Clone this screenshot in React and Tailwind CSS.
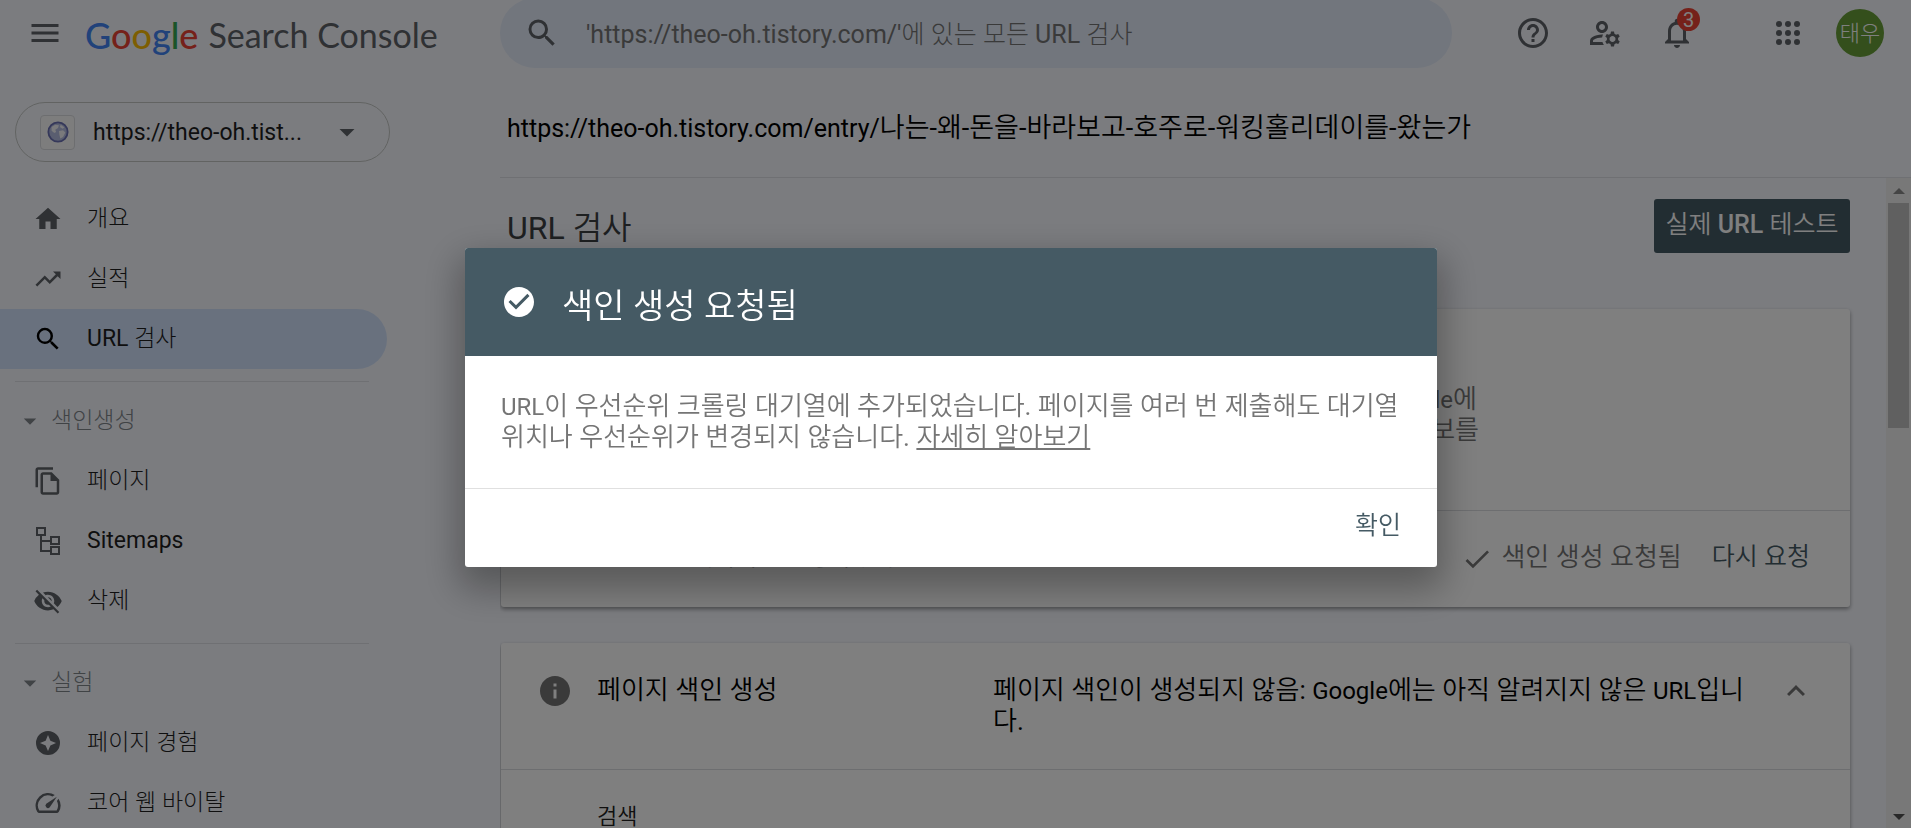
import React, { useState } from 'react';
import {
  MdMenu,
  MdSearch,
  MdHelpOutline,
  MdOutlineManageAccounts,
  MdNotificationsNone,
  MdHome,
  MdTrendingUp,
  MdOutlineFileCopy,
  MdVisibilityOff,
  MdCheck,
  MdCheckCircle,
  MdInfo,
  MdExpandLess,
  MdArrowDropDown,
} from 'react-icons/md';

const SitemapIcon = ({ className }) => (
  <svg viewBox="0 0 30 30" className={className} fill="none" stroke="currentColor" strokeWidth="2">
    <rect x="4" y="2" width="8" height="7" />
    <path d="M8 9v16h9M8 15h9" />
    <rect x="18" y="11" width="8" height="7" />
    <rect x="18" y="21" width="8" height="7" />
  </svg>
);

const ExperienceIcon = ({ className }) => (
  <svg viewBox="0 0 24 24" className={className} fill="currentColor">
    <path
      fillRule="evenodd"
      d="M12 2.400a9.600 9.600 0 1 0 0 19.200a9.600 9.600 0 0 0 0-19.200zM12 5.600l1.900 4.500l4.500 1.900l-4.500 1.900l-1.900 4.500l-1.900-4.500l-4.500-1.900l4.500-1.900z"
    />
  </svg>
);

const SpeedIcon = ({ className }) => (
  <svg viewBox="0 0 24 24" className={className} fill="currentColor">
    <path d="M20.380 8.570l-1.230 1.850a8 8 0 0 1-.22 7.580H5.070A8 8 0 0 1 15.580 6.850l1.850-1.230A10 10 0 0 0 3.350 19a2 2 0 0 0 1.720 1h13.850a2 2 0 0 0 1.740-1 10 10 0 0 0-.27-10.440z" />
    <path d="M10.590 15.410a2 2 0 0 0 2.830 0l5.660-8.490-8.490 5.660a2 2 0 0 0 0 2.830z" />
  </svg>
);

const AppsIcon = ({ className }) => (
  <svg viewBox="0 0 24 24" className={className} fill="currentColor">
    {[6, 12, 18].map((y) => [6, 12, 18].map((x) => <circle key={`${x}-${y}`} cx={x} cy={y} r="2" />))}
  </svg>
);

const GlobeIcon = ({ className }) => (
  <svg viewBox="0 0 24 24" className={className}>
    <circle cx="12" cy="12" r="10.500" fill="#b4bce0" stroke="#6a70b4" strokeWidth="2" />
    <path d="M5 6.500l4-2.500l4 .5l-1 3l-3 2l1 2.500l-2 1l-3-2.500zM13 11l4.500-1l2.500 2.500l-2.500 5l-3 1.500l-1-4z" fill="#f4f4f8" />
    <path d="M15 4l4 3l-2 1.500l-3-2z" fill="#f4f4f8" />
  </svg>
);

const mainItems = [
  { label: '개요', icon: MdHome },
  { label: '실적', icon: MdTrendingUp },
  { label: 'URL 검사', icon: MdSearch, active: true },
];

const sections = [
  {
    title: '색인생성',
    items: [
      { label: '페이지', icon: MdOutlineFileCopy },
      { label: 'Sitemaps', icon: SitemapIcon },
      { label: '삭제', icon: MdVisibilityOff },
    ],
  },
  {
    title: '실험',
    items: [
      { label: '페이지 경험', icon: ExperienceIcon },
      { label: '코어 웹 바이탈', icon: SpeedIcon },
    ],
  },
];

const NavItem = ({ label, icon: Icon, active }) => (
  <a
    href="#"
    aria-current={active ? 'page' : undefined}
    className={`flex h-[60px] items-center gap-6 rounded-r-full pl-[33px] text-[23px] text-[#1f1f1f] ${
      active ? 'bg-[#d3e3fd]' : ''
    }`}
  >
    <Icon className={`size-[30px] shrink-0 ${active ? 'text-black' : 'text-[#5f6368]'}`} />
    <span>{label}</span>
  </a>
);

const Sidebar = () => (
  <aside className="w-[500px] shrink-0 overflow-hidden pt-9">
    <button className="ml-[15px] flex h-[60px] w-[375px] items-center rounded-full border border-[#c4c7c5] pl-6 pr-6 text-[#1f1f1f]">
      <span className="flex size-[35px] shrink-0 items-center justify-center rounded-sm border border-[#dadce0] bg-[#fbfbfb]">
        <GlobeIcon className="size-[22px]" />
      </span>
      <span className="ml-[18px] flex-1 pt-0.5 text-left text-[23px]">https://theo-oh.tist...</span>
      <MdArrowDropDown className="size-9 text-[#5f6368]" />
    </button>

    <nav className="mt-[27px] w-[387px]">
      {mainItems.map((item) => (
        <NavItem key={item.label} {...item} />
      ))}
      {sections.map((section) => (
        <div key={section.title}>
          <div className="ml-[15px] mr-[18px] mt-3 border-t border-[#dfe1e6]" />
          <button className="mt-[9px] flex h-[60px] w-full items-center gap-1.5 pl-[15px] text-[23px] text-[#80868b]">
            <MdArrowDropDown className="size-[30px]" />
            <span>{section.title}</span>
          </button>
          {section.items.map((item) => (
            <NavItem key={item.label} {...item} />
          ))}
        </div>
      ))}
    </nav>
  </aside>
);

const Header = () => (
  <header className="flex h-[66px] shrink-0 items-center">
    <div className="flex w-[500px] shrink-0 items-center pl-[27px]">
      <button aria-label="메뉴">
        <MdMenu className="size-9 text-[#5f6368]" />
      </button>
      <a href="#" className="ml-[22px] flex items-center gap-[10px] whitespace-nowrap pt-1 font-[Lato] text-[34px] leading-10 text-[#5f6368]">
        <span className="text-4xl leading-10 font-medium">
          <span className="text-[#4285f4]">G</span>
          <span className="text-[#ea4335]">o</span>
          <span className="text-[#fbbc04]">o</span>
          <span className="text-[#4285f4]">g</span>
          <span className="text-[#34a853]">l</span>
          <span className="text-[#ea4335]">e</span>
        </span>
        <span>Search Console</span>
      </a>
    </div>
    <div className="flex h-[70px] w-[952px] items-center rounded-full bg-[#e4ecfa] pl-6">
      <MdSearch className="size-9 shrink-0 text-[#5f6368]" />
      <input
        type="text"
        aria-label="URL 검사"
        placeholder="'https://theo-oh.tistory.com/'에 있는 모든 URL 검사"
        className="ml-[26px] flex-1 bg-transparent pt-1 text-[25px] outline-none placeholder:text-[#757575]"
      />
    </div>
    <div className="ml-auto flex items-center pr-[27px] text-[#5f6368]">
      <button aria-label="도움말">
        <MdHelpOutline className="size-9" />
      </button>
      <button aria-label="사용자 설정" className="ml-9">
        <MdOutlineManageAccounts className="size-9" />
      </button>
      <button aria-label="알림" className="relative ml-9">
        <MdNotificationsNone className="size-9" />
        <span className="absolute -top-[7px] left-[18px] flex size-[23px] items-center justify-center rounded-full bg-[#ea4335] text-xl text-white">
          3
        </span>
      </button>
      <button aria-label="Google 앱" className="ml-[75px]">
        <AppsIcon className="size-9" />
      </button>
      <button className="ml-[30px] flex size-12 items-center justify-center rounded-full bg-[#689f38] text-[22px] text-white">
        태우
      </button>
    </div>
  </header>
);

const Scrollbar = () => (
  <div className="flex w-[25px] shrink-0 flex-col items-center bg-[#f1f1f1]">
    <span className="mt-[10px] border-x-[6px] border-b-[6px] border-x-transparent border-b-[#8a8a8a]" />
    <span className="mt-[9px] h-[225px] w-[21px] bg-[#c1c1c1]" />
    <span className="mb-2 mt-auto border-x-[6px] border-t-[6px] border-x-transparent border-t-[#505050]" />
  </div>
);

const Main = () => (
  <main className="flex min-w-0 flex-1 flex-col font-[Roboto,'Noto_Sans_CJK_KR_DemiLight','Noto_Sans_CJK_KR_Light','Noto_Sans_CJK_KR',sans-serif]">
    <div className="h-[111px] shrink-0 pl-[7px] pt-[42px] text-[27px] leading-10 text-black">
      <span className="text-[25px]">https://theo-oh.tistory.com/entry/</span>
      나는-왜-돈을-바라보고-호주로-워킹홀리데이를-왔는가
    </div>
    <div className="flex min-h-0 flex-1 border-t border-[#dfe1e6]">
      <div className="min-w-0 flex-1 overflow-hidden pl-px pr-9 pt-[21px]">
        <div className="flex items-start justify-between pl-1.5">
          <h1 className="pt-[9px] text-[32px] leading-10 text-[#3c4043]">URL 검사</h1>
          <button className="h-[54px] w-[196px] rounded-[3px] bg-[#455a64] pb-0.5 text-[25px] text-white">
            실제 <span className="font-medium">URL</span> 테스트
          </button>
        </div>

        <section className="mt-14 rounded-[3px] bg-white shadow-[0_2px_4px_rgba(0,0,0,0.4)]">
          <div className="h-[202px] border-b border-[#dadce0] pl-[97px] pt-[75px] text-[26px] leading-[30px] text-[#757575]">
            <p className="w-[881px] text-right">
              <span className="pr-0.5"><span className="text-[24px]">Google</span>에</span>
              <br />
              정보를
            </p>
          </div>
          <div className="flex h-[96px] items-center pb-1 pl-[190px] pr-10 text-[26px]">
            <span className="text-[24px] text-[#757575]">페이지를 변경하셨나요?</span>
            <MdCheck className="ml-auto size-9 pt-1 text-[#757575]" />
            <span className="ml-1.5 text-[#757575]">색인 생성 요청됨</span>
            <button className="ml-[30px] text-[25px] text-[#455a64]">다시 요청</button>
          </div>
        </section>

        <section className="mt-9 rounded-[3px] bg-white shadow-[0_2px_4px_rgba(0,0,0,0.4)]">
          <div className="flex h-[127px] items-start border-b border-[#dadce0] pl-9 pr-9 pt-8 text-[26px] leading-[30px] text-black">
            <MdInfo className="-mt-0.5 size-9 text-[#757575]" />
            <h2 className="ml-6 w-[396px] shrink-0">페이지 색인 생성</h2>
            <p className="w-[764px] break-all">
              페이지 색인이 생성되지 않음: <span className="text-[24px]">Google</span>에는 아직 알려지지 않은{' '}
              <span className="text-[24px]">URL</span>입니다.
            </p>
            <button aria-label="접기" className="-mt-0.5 ml-auto">
              <MdExpandLess className="size-9 text-[#757575]" />
            </button>
          </div>
          <div className="h-40 pl-24 pt-8 text-[22px] leading-[30px] text-[#212121]">검색</div>
        </section>
      </div>
      <Scrollbar />
    </div>
  </main>
);

const Dialog = ({ onClose }) => (
  <div className="fixed inset-0 flex items-center justify-center bg-black/50 pb-[13px] pr-[9px] font-[Roboto,'Noto_Sans_CJK_KR_DemiLight','Noto_Sans_CJK_KR_Light','Noto_Sans_CJK_KR',sans-serif]">
    <div
      role="dialog"
      aria-labelledby="dialog-title"
      className="w-[972px] rounded-[3px] bg-white shadow-[0_16px_36px_6px_rgba(0,0,0,0.3)]"
    >
      <div className="flex h-[108px] items-center gap-[25px] rounded-t-[3px] bg-[#455a64] pl-9 text-white">
        <MdCheckCircle className="size-9" />
        <h2 id="dialog-title" className="pt-2 text-[34px]">색인 생성 요청됨</h2>
      </div>
      <p className="h-[132px] pl-9 pr-8 pt-[35px] text-[26px] leading-[30px] text-[#757575]">
        <span className="text-[24px]">URL</span>이 우선순위 크롤링 대기열에 추가되었습니다. 페이지를 여러 번 제출해도 대기열 위치나 우선순위가 변경되지 않습니다.{' '}
        <a href="#" className="underline">자세히 알아보기</a>
      </p>
      <div className="flex h-[79px] items-center justify-end border-t border-[#e0e0e0] pb-1 pr-9">
        <button onClick={onClose} className="text-[25px] text-[#455a64]">
          확인
        </button>
      </div>
    </div>
  </div>
);

const App = () => {
  const [isDialogOpen, setIsDialogOpen] = useState(true);

  return (
    <div className="flex h-screen flex-col overflow-hidden bg-[#f7f9ff] font-[Roboto,'Noto_Sans_CJK_KR_Light','Noto_Sans_CJK_KR',sans-serif] font-normal">
      <Header />
      <div className="flex min-h-0 flex-1">
        <Sidebar />
        <Main />
      </div>
      {isDialogOpen && <Dialog onClose={() => setIsDialogOpen(false)} />}
    </div>
  );
};

export default App;
